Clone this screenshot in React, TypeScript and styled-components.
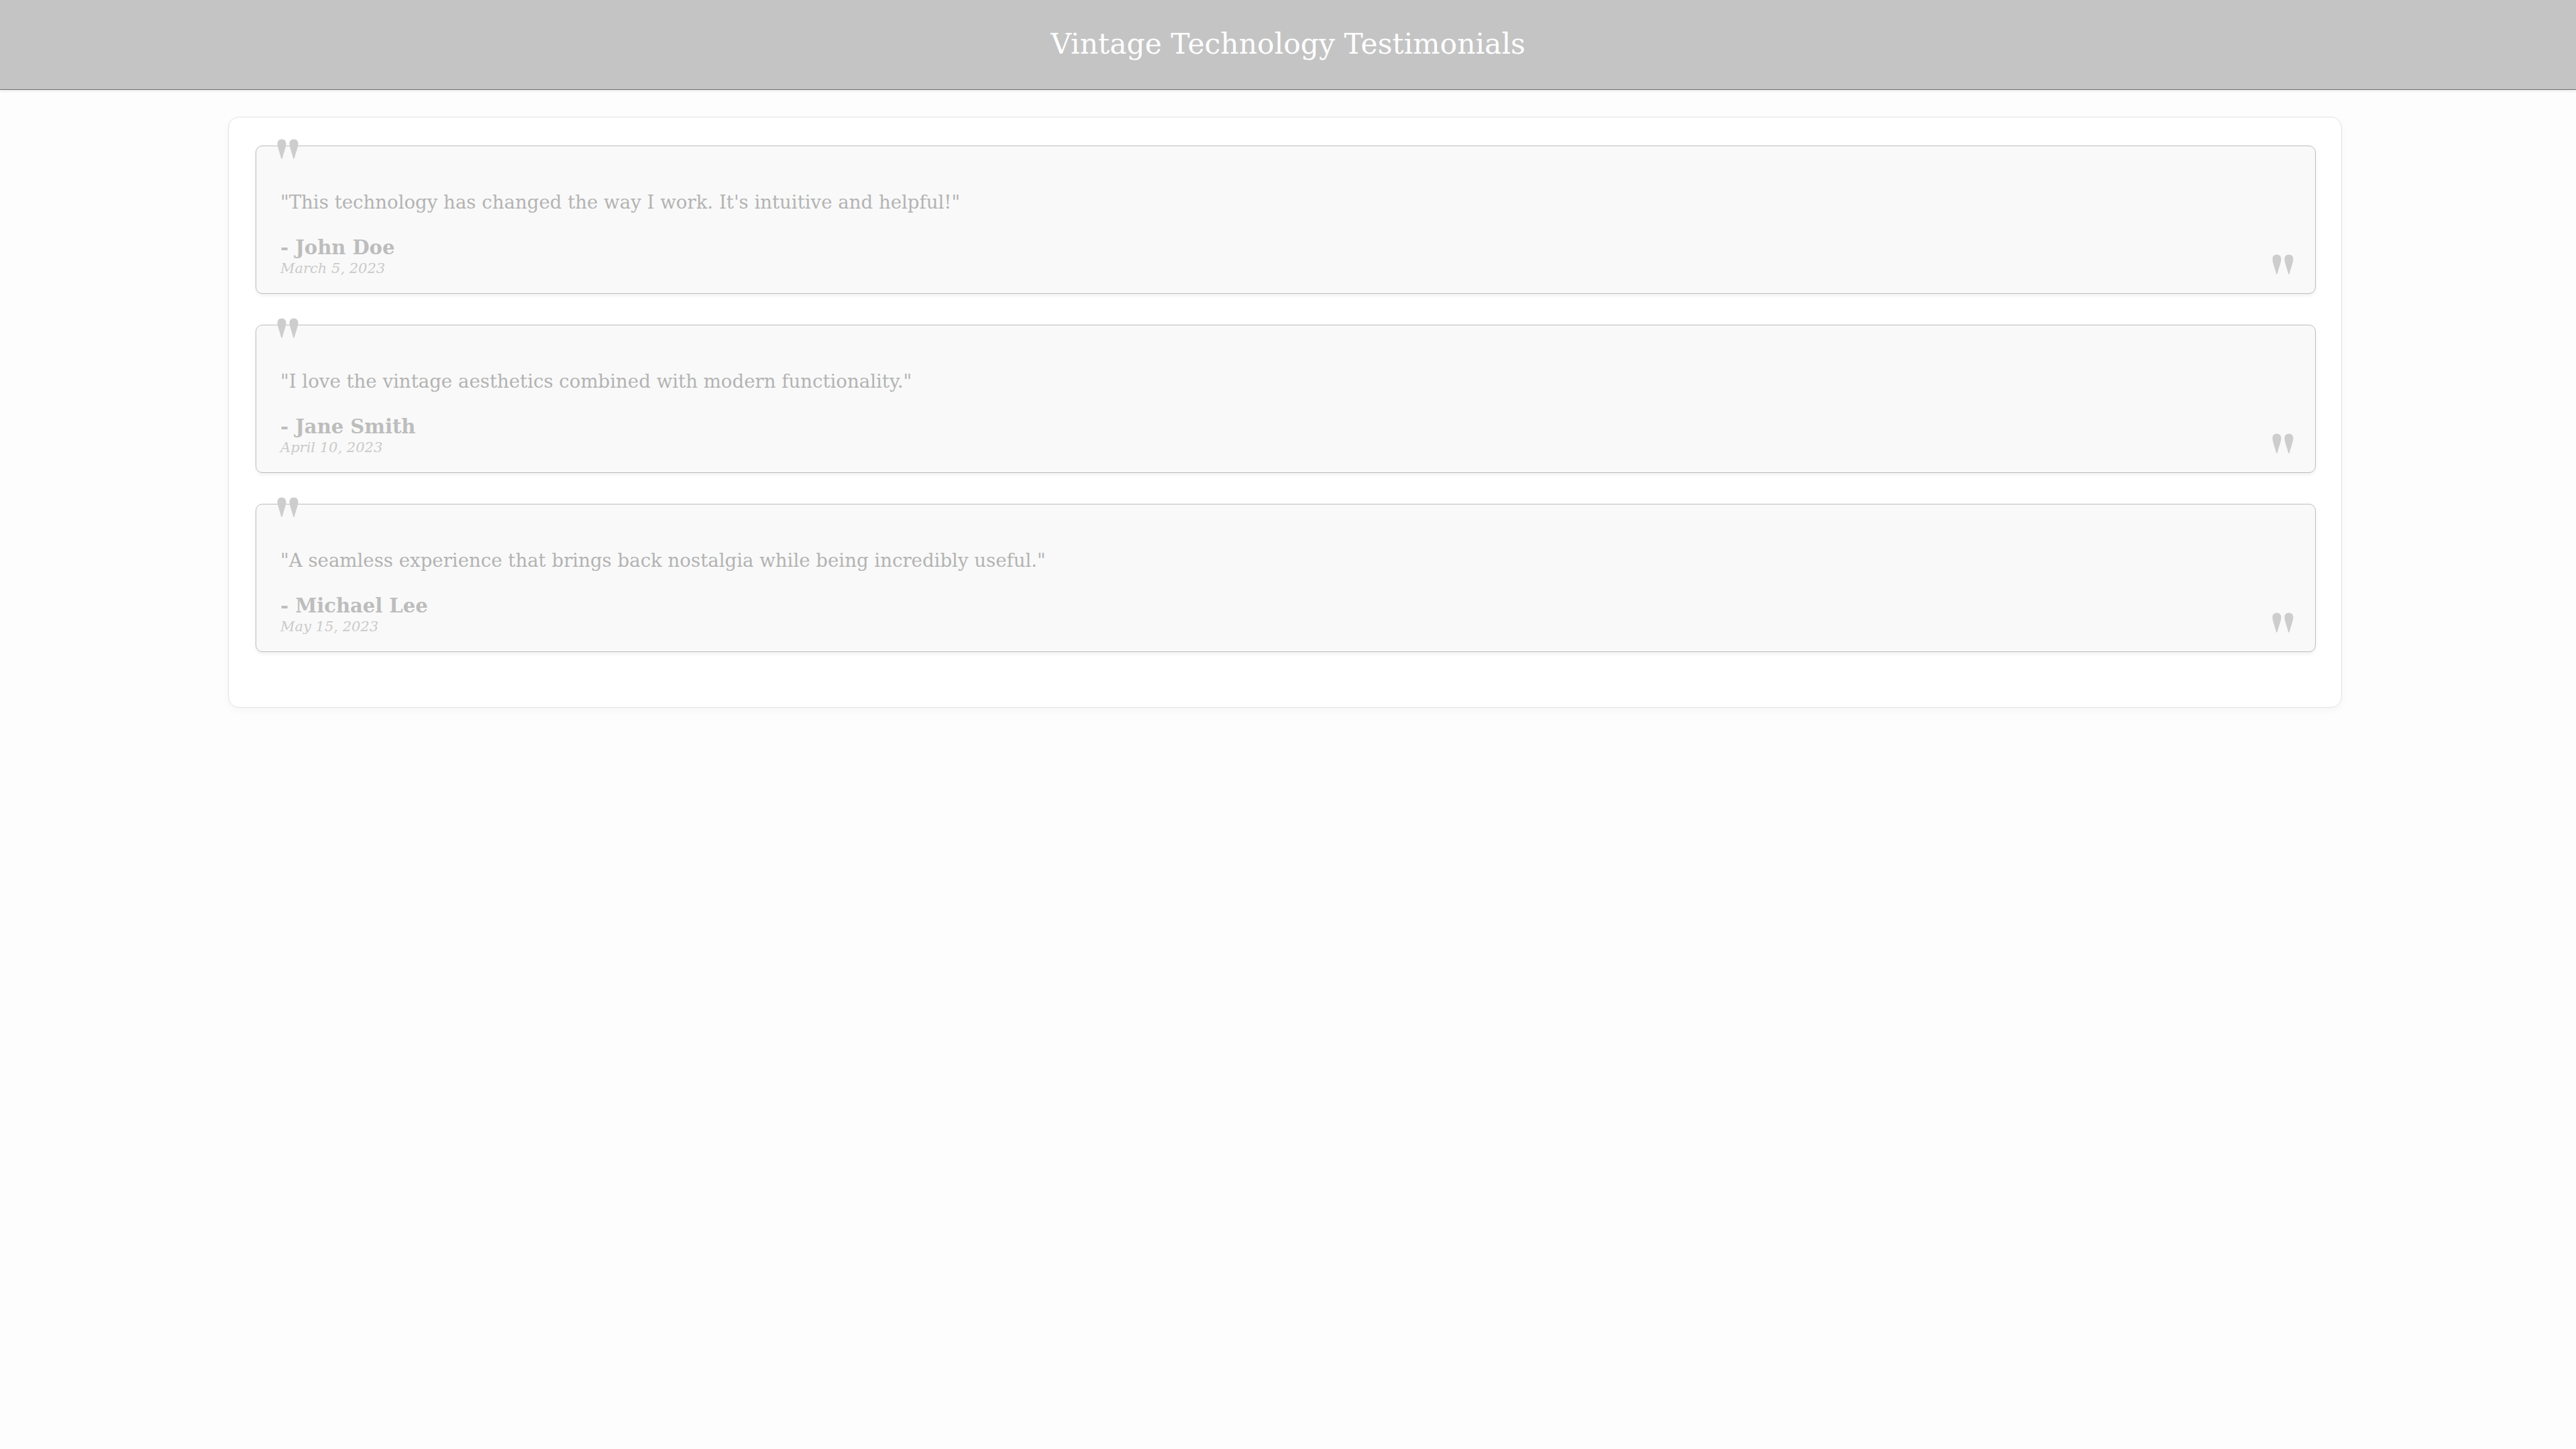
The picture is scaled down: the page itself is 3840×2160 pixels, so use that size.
import React from 'react';
import styled, { createGlobalStyle } from 'styled-components';

const GlobalStyle = createGlobalStyle`
  html, body {
    margin: 0;
    padding: 0;
    background: #fdfdfd;
  }
  body {
    font-family: "DejaVu Serif", Georgia, serif;
    min-height: 100vh;
  }
`;

const Header = styled.header`
  height: 133px;
  background: #c4c4c4;
  border-bottom: 1px solid #6e6e6e;
  box-shadow: 0 2px 4px rgba(0, 0, 0, 0.08);
  display: flex;
  align-items: center;
  justify-content: center;
`;

const Title = styled.h1`
  margin: 0;
  font-size: 42.5px;
  font-weight: normal;
  line-height: 1;
  color: #ffffff;
`;

const Container = styled.main`
  width: 3151px;
  box-sizing: border-box;
  margin: 40px 0 0 340px;
  padding: 42px 38px 36px 40px;
  background: #ffffff;
  border: 1px solid #e2e2e2;
  border-radius: 16px;
  box-shadow: 0 4px 12px rgba(0, 0, 0, 0.03);
  display: flex;
  flex-direction: column;
`;

const Card = styled.article`
  position: relative;
  margin-bottom: 46px;
  padding: 64px 36px 23px;
  background: #f9f9f9;
  border: 1px solid #bdbdbd;
  border-radius: 10px;
  box-shadow: 0 3px 5px rgba(0, 0, 0, 0.06);
  display: flex;
  flex-direction: column;
`;

const QuoteMark = styled.svg<{ $corner: 'start' | 'end' }>`
  position: absolute;
  width: 32px;
  height: 30px;
  fill: #cdcdcd;
  ${({ $corner }) =>
    $corner === 'start'
      ? 'top: -11px; left: 31px;'
      : 'bottom: 28px; right: 32px;'}
`;

const QuoteText = styled.p`
  margin: 0;
  font-size: 27.6px;
  line-height: 40px;
  color: #b3b3b3;
`;

const Author = styled.h3`
  margin: 30px 0 0;
  font-size: 29px;
  line-height: 34px;
  font-weight: bold;
  color: #bdbdbd;
`;

const DateText = styled.span`
  font-size: 21px;
  line-height: 28px;
  font-style: italic;
  color: #cacaca;
`;

const drop = (x: number) =>
  `M${x + 7} 0.5 C${x + 10.8} 0.5 ${x + 13.5} 3.3 ${x + 13.5} 7 C${x + 13.5} 12.5 ${x + 10} 20 ${x + 7.8} 29.5 L${x + 6.2} 29.5 C${x + 4} 20 ${x + 0.5} 12.5 ${x + 0.5} 7 C${x + 0.5} 3.3 ${x + 3.2} 0.5 ${x + 7} 0.5 Z`;

const Quote = ({ corner }: { corner: 'start' | 'end' }) => (
  <QuoteMark $corner={corner} viewBox="0 0 32 30" aria-hidden="true">
    <path d={drop(0)} />
    <path d={drop(18)} />
  </QuoteMark>
);

const testimonials = [
  {
    text: '"This technology has changed the way I work. It\'s intuitive and helpful!"',
    author: '- John Doe',
    date: 'March 5, 2023',
  },
  {
    text: '"I love the vintage aesthetics combined with modern functionality."',
    author: '- Jane Smith',
    date: 'April 10, 2023',
  },
  {
    text: '"A seamless experience that brings back nostalgia while being incredibly useful."',
    author: '- Michael Lee',
    date: 'May 15, 2023',
  },
];

export default function App() {
  return (
    <>
      <GlobalStyle />
      <Header>
        <Title>Vintage Technology Testimonials</Title>
      </Header>
      <Container>
        {testimonials.map((t) => (
          <Card key={t.author}>
            <Quote corner="start" />
            <QuoteText>{t.text}</QuoteText>
            <Author>{t.author}</Author>
            <DateText>{t.date}</DateText>
            <Quote corner="end" />
          </Card>
        ))}
      </Container>
    </>
  );
}
